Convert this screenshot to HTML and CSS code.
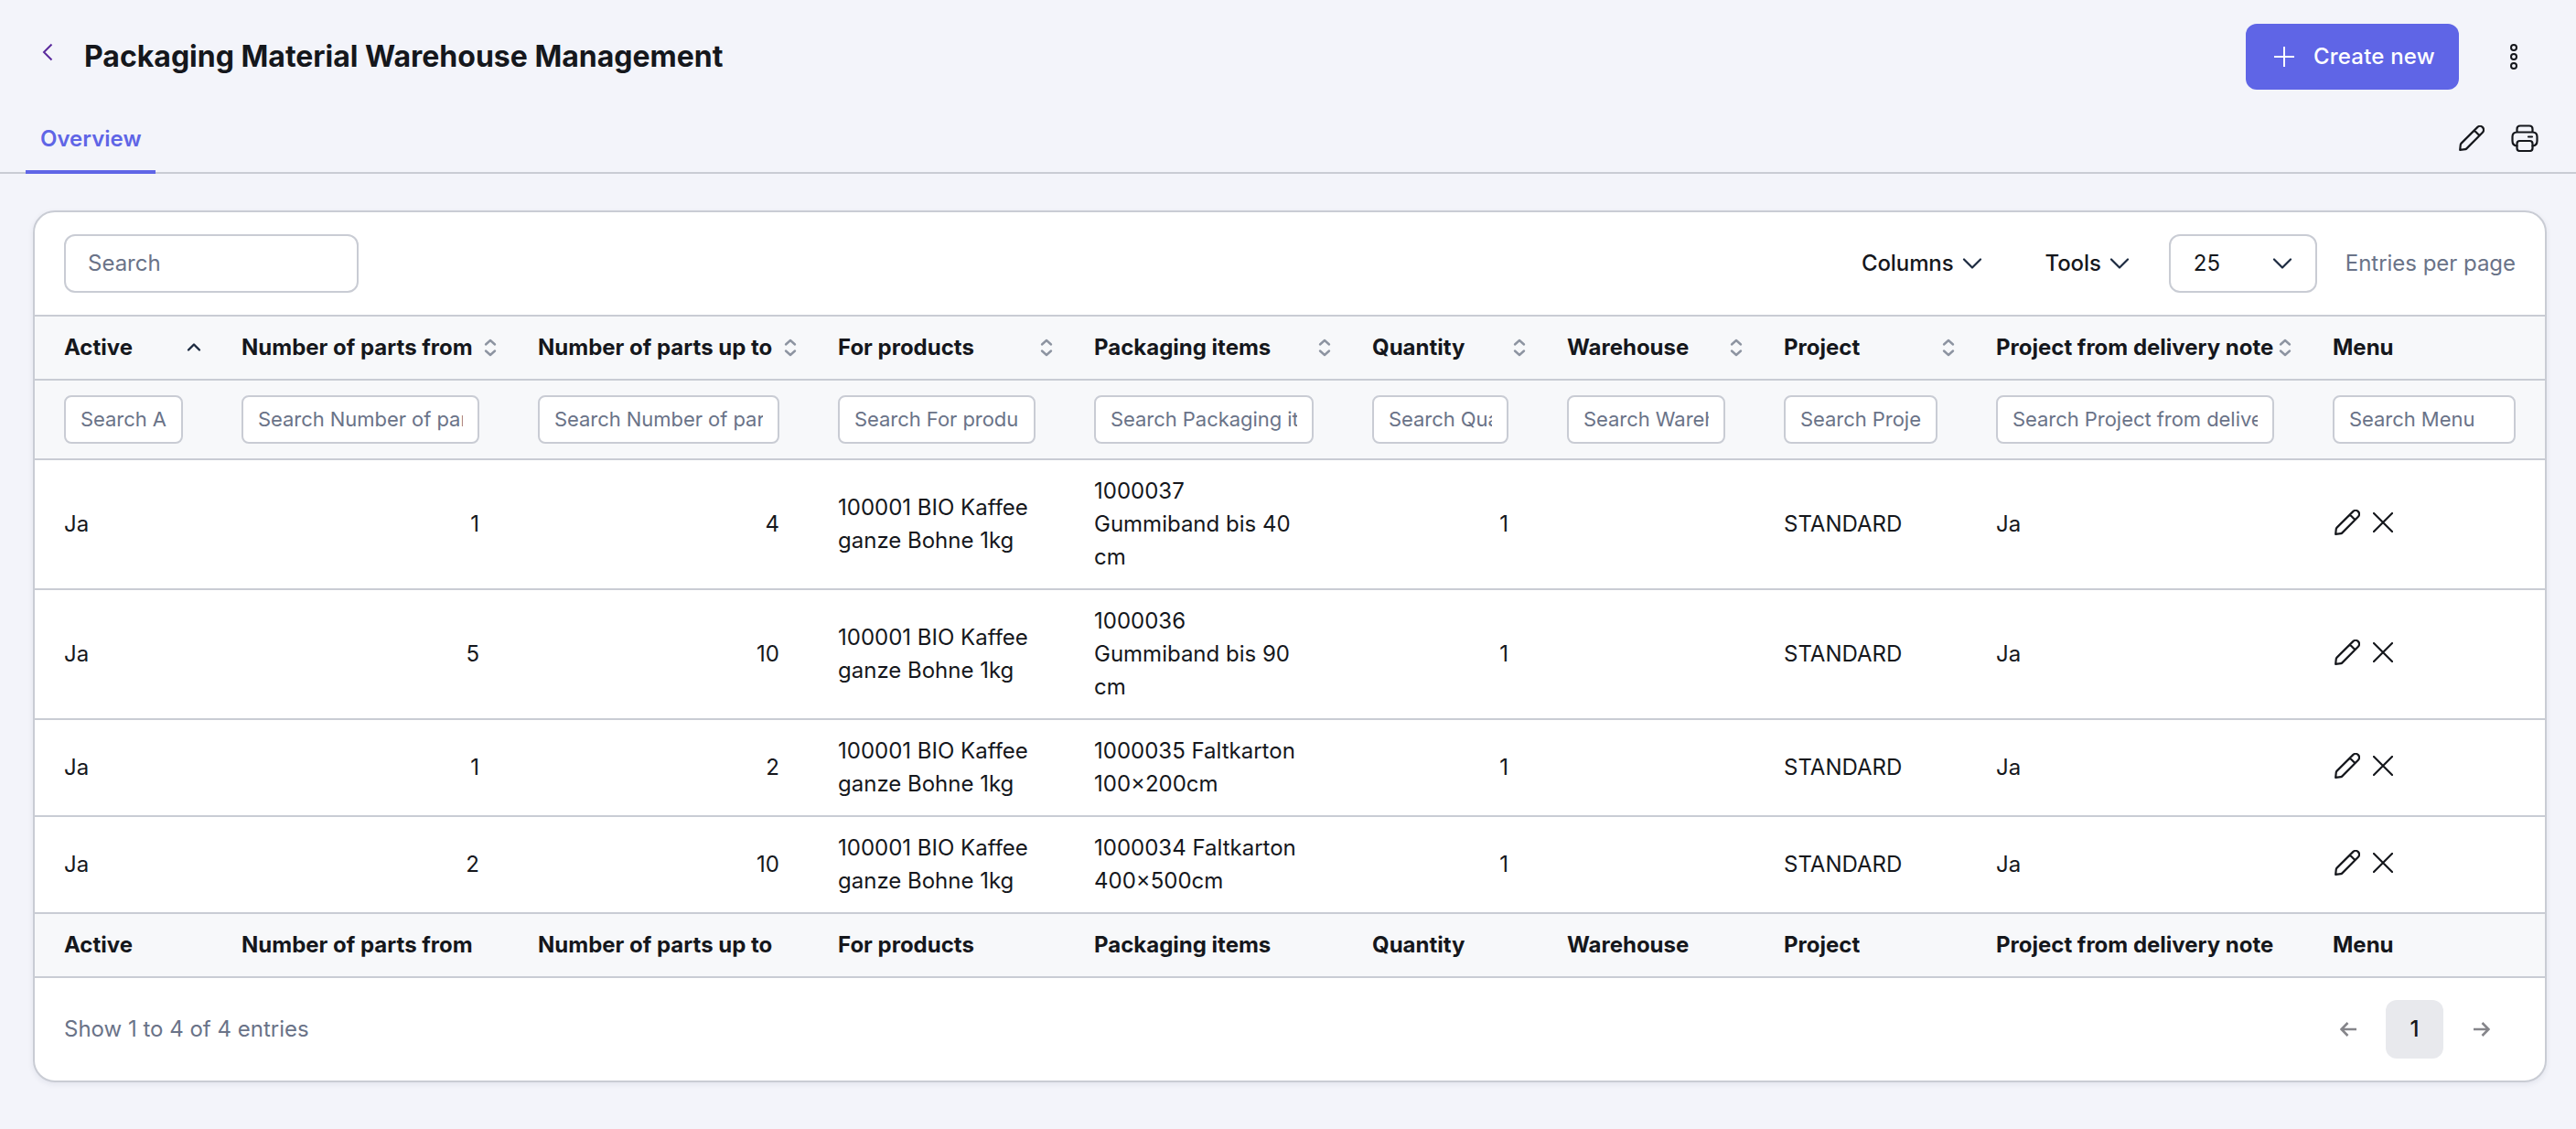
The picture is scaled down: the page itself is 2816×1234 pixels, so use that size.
FILE: index.html
```html
<!DOCTYPE html>
<html lang="en">
<head>
    <meta charset="UTF-8">
    <meta name="viewport" content="width=device-width, initial-scale=1.0">
    <title>Packaging Material Warehouse Management</title>
    <link rel="stylesheet" href="styles.css">
</head>
<body>
    <svg class="sprite">
        <symbol id="icon-pencil" viewBox="0 0 28 28">
            <path d="M1.2 26.8 L1.8 21 Q2 20.2 2.6 19.6 L20.2 2.1 A3.9 3.9 0 0 1 25.9 7.8 L8.4 25.4 Q7.8 26 7 26.2 Z M16.8 5.5 L22.6 11.3"/>
        </symbol>
        <symbol id="icon-close" viewBox="0 0 22 22">
            <path d="M1 1 L21 21 M21 1 L1 21"/>
        </symbol>
        <symbol id="icon-chevron" viewBox="0 0 22 12">
            <path d="M2 1.5 L11 10.5 L20 1.5"/>
        </symbol>
        <symbol id="icon-sort" viewBox="0 0 16 20">
            <path d="M3 6.5 L8 2 L13 6.5 M3 13.5 L8 18 L13 13.5"/>
        </symbol>
    </svg>

    <header class="page-header">
        <a class="back" href="#"><svg width="12" height="20" viewBox="0 0 12 20"><path d="M10.5 1.5 L2 10 L10.5 18.5"/></svg></a>
        <h1>Packaging Material Warehouse Management</h1>
        <button type="button" class="btn-create">
            <svg width="22" height="22" viewBox="0 0 22 22"><path d="M11 0 V22 M0 11 H22"/></svg>
            <span>Create new</span>
        </button>
        <button type="button" class="btn-more">
            <svg width="10" height="30" viewBox="0 0 10 30"><circle cx="5" cy="5" r="3"/><circle cx="5" cy="15" r="3"/><circle cx="5" cy="25" r="3"/></svg>
        </button>
    </header>

    <nav class="tabs">
        <a class="tab active" href="#">Overview</a>
        <div class="tab-actions">
            <svg class="icon" width="28" height="28"><use href="#icon-pencil"/></svg>
            <svg class="icon" width="30" height="30" viewBox="0 0 30 30">
                <path d="M6.5 8.5 V5 Q6.5 1.5 10 1.5 H20 Q23.5 1.5 23.5 5 V8.5 M6.5 23.5 Q1.5 23 1.5 18 V13.5 Q1.5 8.5 6.5 8.5 H23.5 Q28.5 8.5 28.5 13.5 V18 Q28.5 23 23.5 23.5 M19 13.5 H23"/>
                <rect x="6.5" y="18" width="17" height="11" rx="3"/>
            </svg>
        </div>
    </nav>

    <main class="card">
        <div class="toolbar">
            <input type="text" class="search" placeholder="Search">
            <div class="toolbar-right">
                <button type="button" class="dropdown">Columns <svg class="chevron" width="22" height="12"><use href="#icon-chevron"/></svg></button>
                <button type="button" class="dropdown">Tools <svg class="chevron" width="22" height="12"><use href="#icon-chevron"/></svg></button>
                <div class="page-size">25 <svg class="chevron" width="22" height="12"><use href="#icon-chevron"/></svg></div>
                <span class="muted entries-label">Entries per page</span>
            </div>
        </div>

        <table class="data-table">
            <colgroup>
                <col class="col-active">
                <col class="col-from">
                <col class="col-to">
                <col class="col-products">
                <col class="col-items">
                <col class="col-quantity">
                <col class="col-warehouse">
                <col class="col-project">
                <col class="col-note">
                <col class="col-menu">
            </colgroup>
            <thead>
                <tr class="titles">
                    <th><div class="th">Active <svg class="sort sorted" width="16" height="20" viewBox="0 0 16 20"><path d="M2 12.5 L8 6.5 L14 12.5"/></svg></div></th>
                    <th><div class="th">Number of parts from <svg class="sort" width="16" height="20"><use href="#icon-sort"/></svg></div></th>
                    <th><div class="th">Number of parts up to <svg class="sort" width="16" height="20"><use href="#icon-sort"/></svg></div></th>
                    <th><div class="th">For products <svg class="sort" width="16" height="20"><use href="#icon-sort"/></svg></div></th>
                    <th><div class="th">Packaging items <svg class="sort" width="16" height="20"><use href="#icon-sort"/></svg></div></th>
                    <th><div class="th">Quantity <svg class="sort" width="16" height="20"><use href="#icon-sort"/></svg></div></th>
                    <th><div class="th">Warehouse <svg class="sort" width="16" height="20"><use href="#icon-sort"/></svg></div></th>
                    <th><div class="th">Project <svg class="sort" width="16" height="20"><use href="#icon-sort"/></svg></div></th>
                    <th><div class="th">Project from delivery note <svg class="sort" width="16" height="20"><use href="#icon-sort"/></svg></div></th>
                    <th><div class="th">Menu</div></th>
                </tr>
                <tr class="filters">
                    <th><input type="text" placeholder="Search Active"></th>
                    <th><input type="text" placeholder="Search Number of parts from"></th>
                    <th><input type="text" placeholder="Search Number of parts up to"></th>
                    <th><input type="text" placeholder="Search For products"></th>
                    <th><input type="text" placeholder="Search Packaging items"></th>
                    <th><input type="text" placeholder="Search Quantity"></th>
                    <th><input type="text" placeholder="Search Warehouse"></th>
                    <th><input type="text" placeholder="Search Project"></th>
                    <th><input type="text" placeholder="Search Project from delivery note"></th>
                    <th><input type="text" placeholder="Search Menu"></th>
                </tr>
            </thead>
            <tbody>
                <tr>
                    <td>Ja</td>
                    <td class="num">1</td>
                    <td class="num">4</td>
                    <td>100001 BIO Kaffee ganze Bohne 1kg</td>
                    <td>1000037 Gummiband bis 40 cm</td>
                    <td class="num">1</td>
                    <td></td>
                    <td>STANDARD</td>
                    <td>Ja</td>
                    <td><div class="row-actions"><svg class="icon" width="28" height="28"><use href="#icon-pencil"/></svg><svg class="icon" width="22" height="22"><use href="#icon-close"/></svg></div></td>
                </tr>
                <tr>
                    <td>Ja</td>
                    <td class="num">5</td>
                    <td class="num">10</td>
                    <td>100001 BIO Kaffee ganze Bohne 1kg</td>
                    <td>1000036 Gummiband bis 90 cm</td>
                    <td class="num">1</td>
                    <td></td>
                    <td>STANDARD</td>
                    <td>Ja</td>
                    <td><div class="row-actions"><svg class="icon" width="28" height="28"><use href="#icon-pencil"/></svg><svg class="icon" width="22" height="22"><use href="#icon-close"/></svg></div></td>
                </tr>
                <tr>
                    <td>Ja</td>
                    <td class="num">1</td>
                    <td class="num">2</td>
                    <td>100001 BIO Kaffee ganze Bohne 1kg</td>
                    <td>1000035 Faltkarton 100x200cm</td>
                    <td class="num">1</td>
                    <td></td>
                    <td>STANDARD</td>
                    <td>Ja</td>
                    <td><div class="row-actions"><svg class="icon" width="28" height="28"><use href="#icon-pencil"/></svg><svg class="icon" width="22" height="22"><use href="#icon-close"/></svg></div></td>
                </tr>
                <tr>
                    <td>Ja</td>
                    <td class="num">2</td>
                    <td class="num">10</td>
                    <td>100001 BIO Kaffee ganze Bohne 1kg</td>
                    <td>1000034 Faltkarton 400x500cm</td>
                    <td class="num">1</td>
                    <td></td>
                    <td>STANDARD</td>
                    <td>Ja</td>
                    <td><div class="row-actions"><svg class="icon" width="28" height="28"><use href="#icon-pencil"/></svg><svg class="icon" width="22" height="22"><use href="#icon-close"/></svg></div></td>
                </tr>
            </tbody>
            <tfoot>
                <tr>
                    <th>Active</th>
                    <th>Number of parts from</th>
                    <th>Number of parts up to</th>
                    <th>For products</th>
                    <th>Packaging items</th>
                    <th>Quantity</th>
                    <th>Warehouse</th>
                    <th>Project</th>
                    <th>Project from delivery note</th>
                    <th>Menu</th>
                </tr>
            </tfoot>
        </table>

        <div class="card-footer">
            <span class="muted">Show 1 to 4 of 4 entries</span>
            <div class="pagination">
                <button type="button"><svg width="18" height="16" viewBox="0 0 18 16"><path d="M18 8 H2 M8.5 1 L1.5 8 L8.5 15"/></svg></button>
                <button type="button" class="current">1</button>
                <button type="button"><svg width="18" height="16" viewBox="0 0 18 16"><path d="M0 8 H16 M9.5 1 L16.5 8 L9.5 15"/></svg></button>
            </div>
        </div>
    </main>
</body>
</html>
```
FILE: styles.css
```css
:root {
    --bg: #f3f4fa;
    --border: #c9ccd4;
    --text: #15171c;
    --muted: #6a7388;
    --primary: #5f65e6;
}

* {
    box-sizing: border-box;
}

body {
    margin: 0;
    min-height: 100vh;
    background: var(--bg);
    color: var(--text);
    font-family: Inter, "Liberation Sans", sans-serif;
    font-size: 24px;
    line-height: 36px;
}

button,
input {
    font: inherit;
    color: inherit;
}

button {
    border: none;
    background: none;
    padding: 0;
}

svg {
    display: block;
    flex: none;
    fill: none;
    stroke: currentColor;
    stroke-width: 2;
}

.sprite {
    display: none;
}

.icon {
    stroke-width: 2.2;
    stroke-linejoin: round;
    stroke-linecap: round;
}

.page-header {
    display: flex;
    align-items: center;
    height: 124px;
    padding: 0 63px 0 46px;
}

.back {
    color: #5a2a9c;
    margin: 0 34px 10px 0;
}

h1 {
    margin: 0;
    font-size: 32px;
    font-weight: 700;
}

.btn-create {
    display: flex;
    align-items: center;
    gap: 21px;
    width: 233px;
    height: 72px;
    margin-left: auto;
    padding-left: 31px;
    border-radius: 12px;
    background: var(--primary);
    color: #fff;
    font-weight: 500;
    letter-spacing: 0.2px;
    white-space: nowrap;
}

.btn-more {
    margin-left: 55px;
}

.tabs {
    display: flex;
    justify-content: space-between;
    height: 66px;
    padding: 0 41px 0 28px;
    border-bottom: 2px solid var(--border);
}

.tab {
    width: 142px;
    height: 66px;
    padding: 10px 16px 0;
    border-bottom: 4px solid var(--primary);
    color: var(--primary);
    font-weight: 600;
    text-decoration: none;
}

.tab-actions {
    display: flex;
    gap: 29px;
    align-items: center;
    height: 54px;
}

.card {
    margin: 40px 32px 0 36px;
    border: 2px solid var(--border);
    border-radius: 24px;
    background: #fff;
    box-shadow: 0 2px 6px rgba(30, 40, 80, 0.08);
    overflow: hidden;
}

.toolbar {
    display: flex;
    justify-content: space-between;
    padding: 24px 32px;
    height: 112px;
}

.search {
    width: 322px;
    height: 64px;
    padding: 0 24px 1px;
    border: 2px solid var(--border);
    border-radius: 12px;
    background: #fff;
}

input::placeholder {
    color: var(--muted);
    opacity: 1;
}

.toolbar-right {
    display: flex;
    align-items: center;
}

.dropdown {
    display: flex;
    align-items: center;
    gap: 9px;
    margin-right: 69px;
    font-weight: 500;
    letter-spacing: -0.1px;
}

.dropdown + .dropdown {
    margin-right: 43px;
}

.chevron {
    color: #1c2a40;
    stroke-width: 2.2;
    stroke-linecap: round;
    stroke-linejoin: round;
}

.page-size {
    display: flex;
    align-items: center;
    justify-content: space-between;
    width: 162px;
    height: 64px;
    margin-right: 31px;
    padding: 0 25px;
    border: 2px solid var(--border);
    border-radius: 12px;
}

.muted {
    color: var(--muted);
}

.entries-label {
    letter-spacing: -0.03px;
}

.data-table {
    width: 2744px;
    table-layout: fixed;
    border-collapse: separate;
    border-spacing: 0;
}

.col-active { width: 194px; }
.col-from { width: 324px; }
.col-to { width: 328px; }
.col-products { width: 280px; }
.col-items { width: 304px; }
.col-quantity { width: 213px; }
.col-warehouse { width: 237px; }
.col-project { width: 232px; }
.col-note { width: 368px; }
.col-menu { width: 264px; }

th,
td {
    padding: 16px 32px;
    border-bottom: 2px solid var(--border);
    text-align: left;
    vertical-align: middle;
}

th {
    background: #f7f8fa;
    font-weight: 700;
    white-space: nowrap;
}

.titles th {
    padding-right: 12px;
    border-top: 2px solid var(--border);
}

.th {
    display: flex;
    align-items: center;
    justify-content: space-between;
}

.sort {
    color: #8d94a1;
    stroke-width: 2.4;
    stroke-linecap: round;
    stroke-linejoin: round;
}

.sort.sorted {
    color: #1c2a40;
}

.filters input {
    display: block;
    width: 100%;
    height: 53px;
    padding: 0 16px 2px;
    border: 2px solid var(--border);
    border-radius: 8px;
    background: #fff;
    font-size: 22px;
    font-weight: 400;
    letter-spacing: -0.05px;
}

.num {
    text-align: right;
}

.row-actions {
    display: flex;
    align-items: center;
    gap: 14px;
    padding: 0 0 4px 2px;
}

.card-footer {
    display: flex;
    align-items: center;
    justify-content: space-between;
    height: 112px;
    padding: 0 38px 0 32px;
}

.pagination {
    display: flex;
    gap: 10px;
}

.pagination button {
    display: flex;
    align-items: center;
    justify-content: center;
    width: 63px;
    height: 64px;
    border-radius: 12px;
    color: #85858a;
}

.pagination svg {
    stroke-width: 2.6;
}

.pagination .current {
    background: #e8e9ed;
    color: var(--text);
    font-weight: 500;
}
```
